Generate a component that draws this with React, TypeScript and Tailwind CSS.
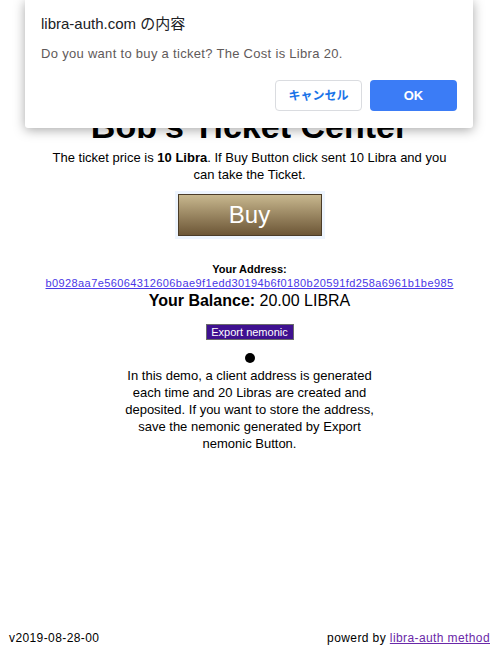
import React from 'react';

const font = { fontFamily: '"Liberation Sans", "Noto Sans CJK JP", sans-serif' };

const AlertDialog: React.FC = () => {
  return (
    <div className="absolute left-[25px] top-0 w-[448px] h-[128px] bg-white rounded-b-[3px] shadow-[0_2px_12px_rgba(0,0,0,0.35)] px-4 pt-[14px]">
      <div className="text-[15px] leading-[20px] text-[#202124]">libra-auth.com の内容</div>
      <div className="mt-[10px] text-[13px] leading-[20px] tracking-[0.3px] text-[#5f5a5a]">
        Do you want to buy a ticket? The Cost is Libra 20.
      </div>
      <div className="mt-[16px] flex justify-end gap-2">
        <button className="w-[87px] h-[31px] rounded-[4px] border border-[#dadce0] bg-white text-[12px] font-bold text-[#1a73e8]">
          キャンセル
        </button>
        <button className="w-[87px] h-[31px] rounded-[4px] bg-[#3b7cf6] text-[13px] font-bold text-white">
          OK
        </button>
      </div>
    </div>
  );
};

const App: React.FC = () => {
  return (
    <div className="relative flex flex-col h-[656px] bg-white text-black" style={font}>
      {/* Page content */}
      <main className="flex-1 flex flex-col items-center pt-[107px] text-center">
        <h1 className="text-[34px] leading-[38px] font-bold">Bob's Ticket Center</h1>
        <p className="mt-1 w-[400px] text-[13px] leading-[17px]">
          The ticket price is <b>10 Libra</b>. If Buy Button click sent 10 Libra and you can take the Ticket.
        </p>

        <div className="mt-[8px] p-[3px] bg-[#eef5fe]">
          <button className="w-[144px] h-[42px] border border-[#4b3c28] bg-gradient-to-b from-[#c8b88f] to-[#6d5737] text-white text-[24px] font-light leading-none">
            Buy
          </button>
        </div>

        <div className="mt-[23px] text-[11px] leading-[14px] font-bold">Your Address:</div>
        <a href="#" className="text-[11px] leading-[14px] tracking-[0.4px] text-[#4a38e6] underline">
          b0928aa7e56064312606bae9f1edd30194b6f0180b20591fd258a6961b1be985
        </a>
        <div className="mt-px text-[16px] leading-[20px]">
          <b>Your Balance:</b> 20.00 LIBRA
        </div>

        <button className="mt-[13px] w-[88px] h-[16px] border border-[#6b6b6b] bg-[#3f1190] text-white text-[11px] leading-[14px]">
          Export nemonic
        </button>

        <div className="mt-[13px] w-[10px] h-[10px] rounded-full bg-black" />

        <p className="mt-[4px] w-[252px] text-[13px] leading-[17px]">
          In this demo, a client address is generated each time and 20 Libras are created and deposited. If you want to store the address, save the nemonic generated by Export nemonic Button.
        </p>
      </main>

      {/* Footer */}
      <footer className="flex justify-between items-center px-[9px] pb-[10px] text-[12px] leading-[16px] tracking-[0.4px]">
        <span>v2019-08-28-00</span>
        <span>
          powerd by{' '}
          <a href="#" className="text-[#6a28a8] underline">
            libra-auth method
          </a>
        </span>
      </footer>

      <AlertDialog />
    </div>
  );
};

export default App;
